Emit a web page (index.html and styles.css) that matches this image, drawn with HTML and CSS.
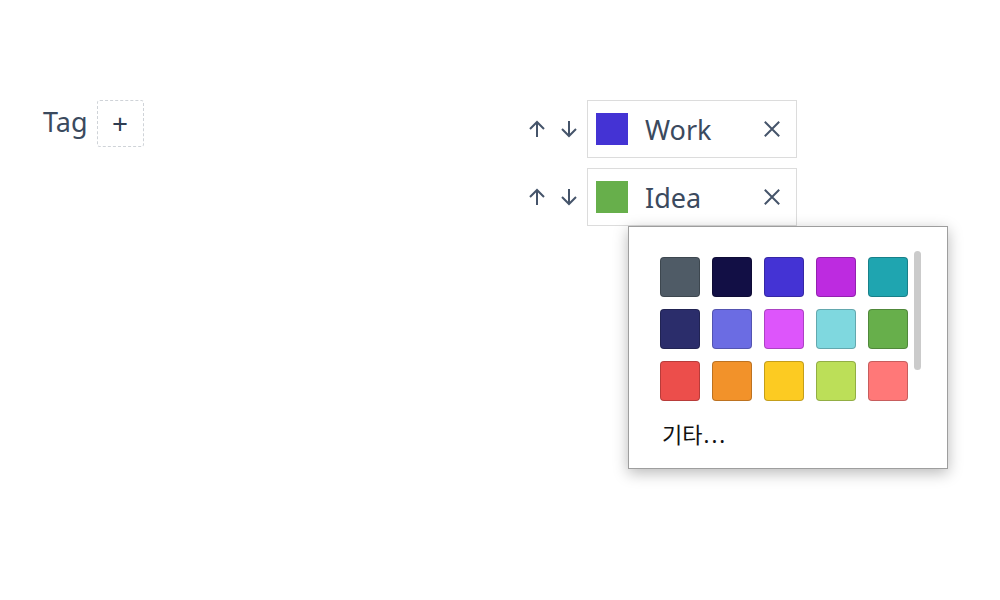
FILE: index.html
```html
<!DOCTYPE html>
<html lang="ko">
<head>
<meta charset="utf-8">
<link rel="stylesheet" href="styles.css">
</head>
<body>
<div class="page">
  <div class="tag-field">
    <span class="tag-label">Tag</span>
    <button class="add-btn">+</button>
  </div>
  <div class="tag-list">
    <div class="tag-row">
      <svg class="arrow" viewBox="0 0 20 20"><path d="M10 18V3M3 10l7-7 7 7"/></svg>
      <svg class="arrow" viewBox="0 0 20 20"><path d="M10 2v15M3 10l7 7 7-7"/></svg>
      <div class="chip">
        <span class="swatch-lg work"></span>
        <span class="chip-name">Work</span>
        <svg class="close" viewBox="0 0 20 20"><path d="M2 2l16 16M18 2L2 18"/></svg>
      </div>
    </div>
    <div class="tag-row">
      <svg class="arrow" viewBox="0 0 20 20"><path d="M10 18V3M3 10l7-7 7 7"/></svg>
      <svg class="arrow" viewBox="0 0 20 20"><path d="M10 2v15M3 10l7 7 7-7"/></svg>
      <div class="chip">
        <span class="swatch-lg idea"></span>
        <span class="chip-name">Idea</span>
        <svg class="close" viewBox="0 0 20 20"><path d="M2 2l16 16M18 2L2 18"/></svg>
      </div>
      <div class="popup">
        <div class="palette">
          <span class="sw c1"></span><span class="sw c2"></span><span class="sw c3"></span><span class="sw c4"></span><span class="sw c5"></span>
          <span class="sw c6"></span><span class="sw c7"></span><span class="sw c8"></span><span class="sw c9"></span><span class="sw c10"></span>
          <span class="sw c11"></span><span class="sw c12"></span><span class="sw c13"></span><span class="sw c14"></span><span class="sw c15"></span>
        </div>
        <div class="scrollbar"></div>
        <div class="more">기타<span class="dots">...</span></div>
      </div>
    </div>
  </div>
</div>
</body>
</html>
```
FILE: styles.css
```css
* { box-sizing: border-box; }
html, body { margin: 0; padding: 0; background: #fff; }
body { font-family: "Noto Sans", "Noto Sans CJK KR", sans-serif; color: #3b4a5e; }
.page {
  display: flex;
  padding: 100px 0 0 43px;
  width: 1000px;
  height: 600px;
}
.tag-field {
  display: flex;
  align-items: center;
  height: 46px;
  gap: 9px;
  width: 484px;
}
.tag-label { font-size: 27px; line-height: 1; margin-top: -3px; }
.add-btn {
  width: 47px;
  height: 47px;
  border: 1px dashed #cfd3d8;
  border-radius: 3px;
  background: #fff;
  font-family: "Noto Sans", sans-serif;
  font-size: 28px;
  color: #2f3d52;
  padding: 0;
  line-height: 1;
  display: flex;
  align-items: center;
  justify-content: center;
}
.tag-list { display: flex; flex-direction: column; gap: 10px; }
.tag-row { display: flex; align-items: center; position: relative; }
.arrow {
  width: 20px;
  height: 20px;
  fill: none;
  stroke: #45546a;
  stroke-width: 2;
  margin-right: 12px;
}
.arrow + .arrow { margin-right: 8px; }
.chip {
  width: 210px;
  height: 58px;
  border: 1px solid #dcdcdc;
  display: flex;
  align-items: center;
  padding: 0 15px 0 8px;
}
.swatch-lg { width: 32px; height: 32px; flex: none; }
.work { background: #4433d4; }
.idea { background: #67af4b; }
.chip-name { font-size: 27px; margin-left: 17px; flex: 1; color: #3b4a5e; }
.close { width: 18px; height: 18px; fill: none; stroke: #45546a; stroke-width: 2.2; }
.popup {
  position: absolute;
  top: 58px;
  left: 101px;
  width: 320px;
  height: 243px;
  background: #fff;
  border: 1px solid #9e9e9e;
  box-shadow: 0 4px 14px rgba(0,0,0,0.28);
  padding: 30px 0 0 31px;
  z-index: 2;
}
.palette {
  display: grid;
  grid-template-columns: repeat(5, 40px);
  grid-auto-rows: 40px;
  gap: 12px;
}
.sw { border-radius: 4px; border: 1px solid rgba(0,0,0,0.22); }
.c1 { background: #4f5b66; }
.c2 { background: #120f45; }
.c3 { background: #4433d4; }
.c4 { background: #bd2be0; }
.c5 { background: #1fa5b0; }
.c6 { background: #2b2d6b; }
.c7 { background: #6b6ce3; }
.c8 { background: #dd55fb; }
.c9 { background: #7fd8df; }
.c10 { background: #67af4b; }
.c11 { background: #ec4e4b; }
.c12 { background: #f2922a; }
.c13 { background: #fccb22; }
.c14 { background: #bcdf58; }
.c15 { background: #ff7878; }
.scrollbar {
  position: absolute;
  top: 24px;
  left: 285px;
  width: 7px;
  height: 119px;
  border-radius: 4px;
  background: #cbcbcb;
}
.more {
  font-size: 22px;
  color: #111;
  margin: 20px 0 0 2px;
  line-height: 1.2;
}
.dots { letter-spacing: 2px; margin-left: 1px; }
```
